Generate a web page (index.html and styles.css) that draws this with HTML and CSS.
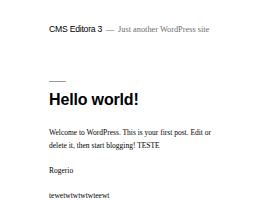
FILE: index.html
```html
<!DOCTYPE html>
<html lang="en">
<head>
    <meta charset="UTF-8">
    <meta name="viewport" content="width=device-width, initial-scale=1.0">
    <title>CMS Editora 3</title>
    <link rel="stylesheet" href="styles.css">
</head>
<body>

    <header class="site-header">
        <div class="header-inner">
            <span class="site-title">CMS Editora 3</span>
            <span class="site-dash">&mdash;</span>
            <span class="site-description">Just another WordPress site</span>
        </div>
    </header>

    <main class="post">
        <div class="post-separator"></div>
        <h1 class="post-title">Hello world!</h1>
        <div class="post-content">
            <p>Welcome to WordPress. This is your first post. Edit or delete it, then start blogging! TESTE</p>
            <p>Rogerio</p>
            <p>tewetwtwtwtwteewt</p>
        </div>
    </main>

</body>
</html>
```

FILE: styles.css
```css
body {
    margin: 0;
    background-color: #fff;
    color: #000;
    font-family: "Liberation Serif", "Times New Roman", serif;
}

.site-header {
    padding-top: 23px;
}

.header-inner {
    width: 182px;
    margin: 0 auto;
    display: flex;
    align-items: baseline;
    line-height: 12px;
}

.site-title {
    font-family: "Liberation Sans", Arial, sans-serif;
    font-size: 8.7px;
    letter-spacing: -0.03em;
    color: #000;
}

.site-dash {
    font-size: 8px;
    color: #6d6d6d;
    margin: 0 4px;
}

.site-description {
    font-size: 8.3px;
    color: #6d6d6d;
}

.post {
    width: 182px;
    margin: 0 auto;
}

.post-separator {
    width: 17px;
    height: 1px;
    background-color: #9a9a9a;
    margin-top: 45px;
}

.post-title {
    font-family: "Liberation Sans", Arial, sans-serif;
    font-size: 16px;
    font-weight: bold;
    letter-spacing: -0.01em;
    line-height: 19.2px;
    margin: 8.4px 0 0 0;
}

.post-content {
    width: 176px;
    margin-top: 17.6px;
}

.post-content p {
    font-size: 7.5px;
    line-height: 12.5px;
    margin: 0 0 12.5px 0;
}
```
